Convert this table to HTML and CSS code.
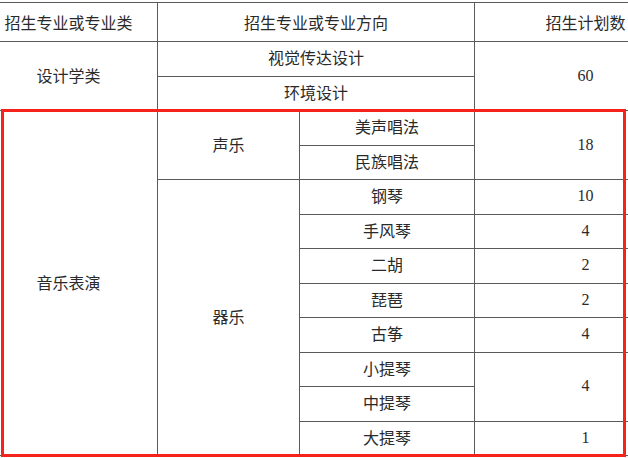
FILE: index.html
```html
<!DOCTYPE html>
<html lang="zh">
<head>
<meta charset="utf-8">
<link rel="stylesheet" href="styles.css">
</head>
<body>
<div class="frame">
  <table class="plan">
    <colgroup>
      <col class="c1"><col class="c2"><col class="c3"><col class="c4">
    </colgroup>
    <tr class="head">
      <td>招生专业或专业类</td>
      <td colspan="2">招生专业或专业方向</td>
      <td>招生计划数</td>
    </tr>
    <tr>
      <td rowspan="2">设计学类</td>
      <td colspan="2">视觉传达设计</td>
      <td rowspan="2" class="num">60</td>
    </tr>
    <tr>
      <td colspan="2">环境设计</td>
    </tr>
    <tr>
      <td rowspan="10">音乐表演</td>
      <td rowspan="2">声乐</td>
      <td>美声唱法</td>
      <td rowspan="2" class="num">18</td>
    </tr>
    <tr>
      <td>民族唱法</td>
    </tr>
    <tr>
      <td rowspan="8">器乐</td>
      <td>钢琴</td>
      <td class="num">10</td>
    </tr>
    <tr><td>手风琴</td><td class="num">4</td></tr>
    <tr><td>二胡</td><td class="num">2</td></tr>
    <tr><td>琵琶</td><td class="num">2</td></tr>
    <tr><td>古筝</td><td class="num">4</td></tr>
    <tr><td>小提琴</td><td rowspan="2" class="num">4</td></tr>
    <tr><td>中提琴</td></tr>
    <tr><td>大提琴</td><td class="num">1</td></tr>
  </table>
  <div class="mark"></div>
</div>
</body>
</html>
```
FILE: styles.css
```css
html, body {
  margin: 0;
  padding: 0;
  background: #ffffff;
  overflow: hidden;
}
.frame {
  position: relative;
  width: 628px;
  height: 458px;
  overflow: hidden;
}
.plan {
  border-collapse: collapse;
  table-layout: fixed;
  width: 717px;
  margin: 2px 0 0 -21px;
  font-family: "Noto Sans CJK SC", "Noto Sans", sans-serif;
  font-size: 16px;
  color: #2a2a2a;
}
.c1 { width: 178px; }
.c2 { width: 142px; }
.c3 { width: 175px; }
.c4 { width: 222px; }
.plan td {
  border: 1px solid #5a5a5a;
  text-align: center;
  vertical-align: middle;
  padding: 0 0 3px 0;
  height: 30.5px;
  line-height: 20px;
}
.plan .head td {
  height: 37px;
  padding-bottom: 1px;
}
.plan td.num {
  font-family: "Liberation Serif", serif;
  font-size: 16px;
  padding-bottom: 1px;
  height: 32.5px;
}
.mark {
  position: absolute;
  left: 1px;
  top: 109px;
  width: 619px;
  height: 342px;
  border: 3px solid #f5231b;
}
```
